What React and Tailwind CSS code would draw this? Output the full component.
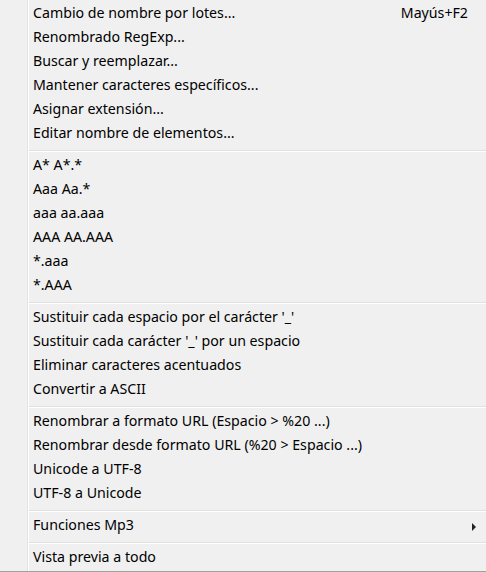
import React from "react";

const groups = [
  [
    { label: "Cambio de nombre por lotes...", shortcut: "Mayús+F2" },
    { label: "Renombrado RegExp..." },
    { label: "Buscar y reemplazar..." },
    { label: "Mantener caracteres específicos..." },
    { label: "Asignar extensión..." },
    { label: "Editar nombre de elementos..." },
  ],
  [
    { label: "A* A*.*" },
    { label: "Aaa Aa.*" },
    { label: "aaa aa.aaa" },
    { label: "AAA AA.AAA" },
    { label: "*.aaa" },
    { label: "*.AAA" },
  ],
  [
    { label: "Sustituir cada espacio por el carácter '_'" },
    { label: "Sustituir cada carácter '_' por un espacio" },
    { label: "Eliminar caracteres acentuados" },
    { label: "Convertir a ASCII" },
  ],
  [
    { label: "Renombrar a formato URL (Espacio > %20 ...)" },
    { label: "Renombrar desde formato URL (%20 > Espacio ...)" },
    { label: "Unicode a UTF-8" },
    { label: "UTF-8 a Unicode" },
  ],
  [{ label: "Funciones Mp3", submenu: true }],
  [{ label: "Vista previa a todo" }],
];

function Item({ label, shortcut, submenu }) {
  return (
    <div className="flex h-[24px] items-center pb-[4px] pl-[33px] pr-[18px]">
      <span className="flex-1 whitespace-nowrap">{label}</span>
      {shortcut && <span className="whitespace-nowrap">{shortcut}</span>}
      {submenu && (
        <svg width="5" height="8" viewBox="0 0 5 8" className="mr-[-9px] mt-[4px]">
          <path d="M0 0 L4 4 L0 8 Z" fill="#222" />
        </svg>
      )}
    </div>
  );
}

function Separator() {
  return (
    <div className="flex h-[8px] flex-col justify-center pl-[29px]">
      <div className="h-px bg-[#e0e0e0]" />
      <div className="h-px bg-white" />
    </div>
  );
}

export default function App() {
  return (
    <div
      className="relative h-[572px] w-[486px] overflow-hidden border-b border-[#a0a0a0] bg-[#f0f0f0] pt-[3px] text-[14.2px] text-black"
      style={{ fontFamily: '"Noto Sans", "Open Sans", sans-serif' }}
    >
      <div className="absolute left-[27px] top-0 bottom-0 w-px bg-[#e2e3e3]" />
      <div className="absolute left-[28px] top-0 bottom-0 w-px bg-white" />
      <div className="relative">
        {groups.map((g, gi) => (
          <React.Fragment key={gi}>
            {gi > 0 && <Separator />}
            {g.map((it, i) => (
              <Item key={i} {...it} />
            ))}
          </React.Fragment>
        ))}
      </div>
    </div>
  );
}
